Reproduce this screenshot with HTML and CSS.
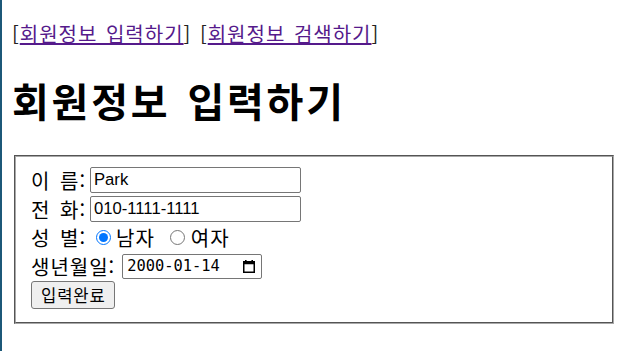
FILE: index.html
```html
<!DOCTYPE html>
<html lang="ko">
<head>
<meta charset="utf-8">
<title>회원정보 입력하기</title>
<link rel="stylesheet" href="styles.css">
</head>
<body>
<div class="nav">[<a href="#" class="link">회원정보 입력하기</a>] [<a href="#" class="link">회원정보 검색하기</a>]</div>
<h1 class="title">회원정보 입력하기</h1>
<form class="form">
  <fieldset class="box">
    <div class="row">
      <span class="label">이 름:</span>
      <input class="text-input" type="text" value="Park">
    </div>
    <div class="row">
      <span class="label">전 화:</span>
      <input class="text-input" type="text" value="010-1111-1111">
    </div>
    <div class="row">
      <span class="label">성 별:</span>
      <input class="radio radio-first" type="radio" name="gender" checked>
      <span class="opt">남자</span>
      <input class="radio radio-second" type="radio" name="gender">
      <span class="opt">여자</span>
    </div>
    <div class="row">
      <span class="label">생년월일:</span>
      <div class="date-input">
        <span class="date-text">2000-01-14</span>
        <svg class="cal-icon" width="12" height="13" viewBox="0 0 12 13" aria-hidden="true">
          <rect x="2" y="0" width="1.6" height="2" fill="#000"/>
          <rect x="8.4" y="0" width="1.6" height="2" fill="#000"/>
          <rect x="0.75" y="1.75" width="10.5" height="10.5" fill="none" stroke="#000" stroke-width="1.5"/>
          <rect x="0.75" y="1.75" width="10.5" height="2.5" fill="#000"/>
        </svg>
      </div>
    </div>
    <div class="row">
      <button class="submit" type="button">입력완료</button>
    </div>
  </fieldset>
</form>
</body>
</html>
```

FILE: styles.css
```css
html {
  border-left: 2px solid #1c5878;
  min-height: 100%;
  box-sizing: border-box;
  background: #fff;
}

body {
  margin: 0 10px;
  font-family: "Noto Sans CJK KR", "Noto Sans", sans-serif;
  font-size: 20px;
  letter-spacing: 0.05em;
  word-spacing: 0.15em;
  color: #000;
}

.nav {
  margin-top: 19px;
  height: 30px;
  line-height: 30px;
  word-spacing: 0.1em;
  color: #222;
}

.link {
  color: #551a8b;
  text-decoration: underline;
}

.title {
  margin: 27px 0 31px;
  font-size: 40px;
  line-height: 48px;
  letter-spacing: 2.8px;
  font-weight: bold;
}

.form {
  margin: 0;
}

.box {
  margin: 0 1px 0 2px;
  padding: 9px 15px 13px;
  border: 2px groove #a8a8a8;
  display: grid;
  grid-auto-rows: 28.7px;
  align-items: center;
}

.row {
  display: flex;
  align-items: center;
  white-space: nowrap;
}

.label {
  margin-right: 4px;
}

.text-input {
  box-sizing: border-box;
  width: 211px;
  height: 26px;
  margin: 0;
  padding: 1px 3px;
  border: 1px solid #767676;
  border-radius: 2px;
  font-family: "Liberation Sans", Arial, sans-serif;
  font-size: 16.67px;
  letter-spacing: 0;
  word-spacing: 0;
  color: #000;
  background: #fff;
}

.radio {
  width: 15px;
  height: 15px;
  margin: 0;
}

.radio-first {
  margin-left: 6px;
  margin-right: 5px;
}

.radio-second {
  margin-left: 15px;
  margin-right: 6px;
}

.date-input {
  box-sizing: border-box;
  width: 140px;
  height: 25px;
  margin-left: 3px;
  padding: 0 6px 0 4px;
  border: 1px solid #767676;
  border-radius: 2px;
  display: flex;
  align-items: center;
  justify-content: space-between;
  background: #fff;
}

.date-text {
  font-family: "DejaVu Sans Mono", monospace;
  font-size: 15.4px;
  letter-spacing: 0;
  color: #000;
}

.cal-icon {
  display: block;
}

.submit {
  box-sizing: border-box;
  height: 28px;
  margin: 0;
  padding: 0 8px 0 9px;
  border: 1px solid #767676;
  border-radius: 3px;
  background: #efefef;
  font-family: "Noto Sans CJK KR", sans-serif;
  font-size: 16.67px;
  letter-spacing: 0.05em;
  line-height: 24px;
  color: #000;
}
```
